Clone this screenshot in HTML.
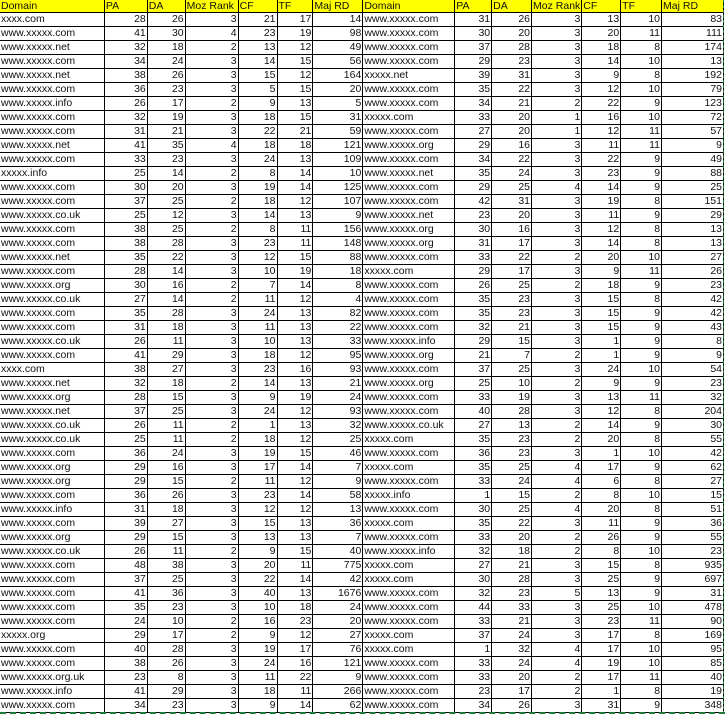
<!DOCTYPE html>
<html><head><meta charset="utf-8">
<style>
html,body{margin:0;padding:0;background:#fff;width:725px;height:715px;overflow:hidden}
table{position:absolute;left:-1px;top:-1px;border-collapse:collapse;table-layout:fixed;font-family:"Liberation Sans",Arial,sans-serif;font-size:10.5px;color:#111}
td{border:1px solid #000;padding:0 1px 0 0;text-align:right;white-space:nowrap;overflow:hidden;height:13px;line-height:13px}
td.d{text-align:left;padding:0 0 0 1px}
tr.h td{background:#ffff00;text-align:left;height:12px;line-height:12px;padding-left:1px}
.gb{position:absolute;left:0;top:712px;width:725px;height:0;border-top:2px dashed #1e7a3c}
.gr{position:absolute;left:723px;top:0;width:0;height:714px;border-left:1px dashed #1e7a3c}
</style></head><body>
<table>
<colgroup><col style="width:105px"><col style="width:43px"><col style="width:38px"><col style="width:53px"><col style="width:39px"><col style="width:36px"><col style="width:50px"><col style="width:92px"><col style="width:37px"><col style="width:40px"><col style="width:49px"><col style="width:39px"><col style="width:41px"><col style="width:62px"></colgroup>
<tr class="h"><td>Domain</td><td>PA</td><td>DA</td><td>Moz Rank</td><td>CF</td><td>TF</td><td>Maj RD</td><td>Domain</td><td>PA</td><td>DA</td><td>Moz Rank</td><td>CF</td><td>TF</td><td>Maj RD</td></tr>
<tr><td class="d">xxxx.com</td><td>28</td><td>26</td><td>3</td><td>21</td><td>17</td><td>14</td><td class="d">www.xxxxx.com</td><td>31</td><td>26</td><td>3</td><td>13</td><td>10</td><td>83</td></tr>
<tr><td class="d">www.xxxxx.com</td><td>41</td><td>30</td><td>4</td><td>23</td><td>19</td><td>98</td><td class="d">www.xxxxx.com</td><td>30</td><td>20</td><td>3</td><td>20</td><td>11</td><td>111</td></tr>
<tr><td class="d">www.xxxxx.net</td><td>32</td><td>18</td><td>2</td><td>13</td><td>12</td><td>49</td><td class="d">www.xxxxx.com</td><td>37</td><td>28</td><td>3</td><td>18</td><td>8</td><td>174</td></tr>
<tr><td class="d">www.xxxxx.com</td><td>34</td><td>24</td><td>3</td><td>14</td><td>15</td><td>56</td><td class="d">www.xxxxx.com</td><td>29</td><td>23</td><td>3</td><td>14</td><td>10</td><td>13</td></tr>
<tr><td class="d">www.xxxxx.net</td><td>38</td><td>26</td><td>3</td><td>15</td><td>12</td><td>164</td><td class="d">xxxxx.net</td><td>39</td><td>31</td><td>3</td><td>9</td><td>8</td><td>192</td></tr>
<tr><td class="d">www.xxxxx.com</td><td>36</td><td>23</td><td>3</td><td>5</td><td>15</td><td>20</td><td class="d">www.xxxxx.com</td><td>35</td><td>22</td><td>3</td><td>12</td><td>10</td><td>79</td></tr>
<tr><td class="d">www.xxxxx.info</td><td>26</td><td>17</td><td>2</td><td>9</td><td>13</td><td>5</td><td class="d">www.xxxxx.com</td><td>34</td><td>21</td><td>2</td><td>22</td><td>9</td><td>123</td></tr>
<tr><td class="d">www.xxxxx.com</td><td>32</td><td>19</td><td>3</td><td>18</td><td>15</td><td>31</td><td class="d">xxxxx.com</td><td>33</td><td>20</td><td>1</td><td>16</td><td>10</td><td>72</td></tr>
<tr><td class="d">www.xxxxx.com</td><td>31</td><td>21</td><td>3</td><td>22</td><td>21</td><td>59</td><td class="d">www.xxxxx.com</td><td>27</td><td>20</td><td>1</td><td>12</td><td>11</td><td>57</td></tr>
<tr><td class="d">www.xxxxx.net</td><td>41</td><td>35</td><td>4</td><td>18</td><td>18</td><td>121</td><td class="d">www.xxxxx.org</td><td>29</td><td>16</td><td>3</td><td>11</td><td>11</td><td>9</td></tr>
<tr><td class="d">www.xxxxx.com</td><td>33</td><td>23</td><td>3</td><td>24</td><td>13</td><td>109</td><td class="d">www.xxxxx.com</td><td>34</td><td>22</td><td>3</td><td>22</td><td>9</td><td>49</td></tr>
<tr><td class="d">xxxxx.info</td><td>25</td><td>14</td><td>2</td><td>8</td><td>14</td><td>10</td><td class="d">www.xxxxx.net</td><td>35</td><td>24</td><td>3</td><td>23</td><td>9</td><td>88</td></tr>
<tr><td class="d">www.xxxxx.com</td><td>30</td><td>20</td><td>3</td><td>19</td><td>14</td><td>125</td><td class="d">www.xxxxx.com</td><td>29</td><td>25</td><td>4</td><td>14</td><td>9</td><td>25</td></tr>
<tr><td class="d">www.xxxxx.com</td><td>37</td><td>25</td><td>2</td><td>18</td><td>12</td><td>107</td><td class="d">www.xxxxx.com</td><td>42</td><td>31</td><td>3</td><td>19</td><td>8</td><td>151</td></tr>
<tr><td class="d">www.xxxxx.co.uk</td><td>25</td><td>12</td><td>3</td><td>14</td><td>13</td><td>9</td><td class="d">www.xxxxx.net</td><td>23</td><td>20</td><td>3</td><td>11</td><td>9</td><td>29</td></tr>
<tr><td class="d">www.xxxxx.com</td><td>38</td><td>25</td><td>2</td><td>8</td><td>11</td><td>156</td><td class="d">www.xxxxx.org</td><td>30</td><td>16</td><td>3</td><td>12</td><td>8</td><td>13</td></tr>
<tr><td class="d">www.xxxxx.com</td><td>38</td><td>28</td><td>3</td><td>23</td><td>11</td><td>148</td><td class="d">www.xxxxx.org</td><td>31</td><td>17</td><td>3</td><td>14</td><td>8</td><td>13</td></tr>
<tr><td class="d">www.xxxxx.net</td><td>35</td><td>22</td><td>3</td><td>12</td><td>15</td><td>88</td><td class="d">www.xxxxx.com</td><td>33</td><td>22</td><td>2</td><td>20</td><td>10</td><td>27</td></tr>
<tr><td class="d">www.xxxxx.com</td><td>28</td><td>14</td><td>3</td><td>10</td><td>19</td><td>18</td><td class="d">xxxxx.com</td><td>29</td><td>17</td><td>3</td><td>9</td><td>11</td><td>26</td></tr>
<tr><td class="d">www.xxxxx.org</td><td>30</td><td>16</td><td>2</td><td>7</td><td>14</td><td>8</td><td class="d">www.xxxxx.com</td><td>26</td><td>25</td><td>2</td><td>18</td><td>9</td><td>23</td></tr>
<tr><td class="d">www.xxxxx.co.uk</td><td>27</td><td>14</td><td>2</td><td>11</td><td>12</td><td>4</td><td class="d">www.xxxxx.com</td><td>35</td><td>23</td><td>3</td><td>15</td><td>8</td><td>42</td></tr>
<tr><td class="d">www.xxxxx.com</td><td>35</td><td>28</td><td>3</td><td>24</td><td>13</td><td>82</td><td class="d">www.xxxxx.com</td><td>35</td><td>23</td><td>3</td><td>15</td><td>9</td><td>42</td></tr>
<tr><td class="d">www.xxxxx.com</td><td>31</td><td>18</td><td>3</td><td>11</td><td>13</td><td>22</td><td class="d">www.xxxxx.com</td><td>32</td><td>21</td><td>3</td><td>15</td><td>9</td><td>43</td></tr>
<tr><td class="d">www.xxxxx.co.uk</td><td>26</td><td>11</td><td>3</td><td>10</td><td>13</td><td>33</td><td class="d">www.xxxxx.info</td><td>29</td><td>15</td><td>3</td><td>1</td><td>9</td><td>8</td></tr>
<tr><td class="d">www.xxxxx.com</td><td>41</td><td>29</td><td>3</td><td>18</td><td>12</td><td>95</td><td class="d">www.xxxxx.org</td><td>21</td><td>7</td><td>2</td><td>1</td><td>9</td><td>9</td></tr>
<tr><td class="d">xxxx.com</td><td>38</td><td>27</td><td>3</td><td>23</td><td>16</td><td>93</td><td class="d">www.xxxxx.com</td><td>37</td><td>25</td><td>3</td><td>24</td><td>10</td><td>54</td></tr>
<tr><td class="d">www.xxxxx.net</td><td>32</td><td>18</td><td>2</td><td>14</td><td>13</td><td>21</td><td class="d">www.xxxxx.org</td><td>25</td><td>10</td><td>2</td><td>9</td><td>9</td><td>23</td></tr>
<tr><td class="d">www.xxxxx.org</td><td>28</td><td>15</td><td>3</td><td>9</td><td>19</td><td>24</td><td class="d">www.xxxxx.com</td><td>33</td><td>19</td><td>3</td><td>13</td><td>11</td><td>32</td></tr>
<tr><td class="d">www.xxxxx.net</td><td>37</td><td>25</td><td>3</td><td>24</td><td>12</td><td>93</td><td class="d">www.xxxxx.com</td><td>40</td><td>28</td><td>3</td><td>12</td><td>8</td><td>204</td></tr>
<tr><td class="d">www.xxxxx.co.uk</td><td>26</td><td>11</td><td>2</td><td>1</td><td>13</td><td>32</td><td class="d">www.xxxxx.co.uk</td><td>27</td><td>13</td><td>2</td><td>14</td><td>9</td><td>30</td></tr>
<tr><td class="d">www.xxxxx.co.uk</td><td>25</td><td>11</td><td>2</td><td>18</td><td>12</td><td>25</td><td class="d">xxxxx.com</td><td>35</td><td>23</td><td>2</td><td>20</td><td>8</td><td>55</td></tr>
<tr><td class="d">www.xxxxx.com</td><td>36</td><td>24</td><td>3</td><td>19</td><td>15</td><td>46</td><td class="d">www.xxxxx.com</td><td>36</td><td>23</td><td>3</td><td>1</td><td>10</td><td>42</td></tr>
<tr><td class="d">www.xxxxx.org</td><td>29</td><td>16</td><td>3</td><td>17</td><td>14</td><td>7</td><td class="d">xxxxx.com</td><td>35</td><td>25</td><td>4</td><td>17</td><td>9</td><td>62</td></tr>
<tr><td class="d">www.xxxxx.org</td><td>29</td><td>15</td><td>2</td><td>11</td><td>12</td><td>9</td><td class="d">www.xxxxx.com</td><td>33</td><td>24</td><td>4</td><td>6</td><td>8</td><td>27</td></tr>
<tr><td class="d">www.xxxxx.com</td><td>36</td><td>26</td><td>3</td><td>23</td><td>14</td><td>58</td><td class="d">xxxxx.info</td><td>1</td><td>15</td><td>2</td><td>8</td><td>10</td><td>15</td></tr>
<tr><td class="d">www.xxxxx.info</td><td>31</td><td>18</td><td>3</td><td>12</td><td>12</td><td>13</td><td class="d">www.xxxxx.com</td><td>30</td><td>25</td><td>4</td><td>20</td><td>8</td><td>51</td></tr>
<tr><td class="d">www.xxxxx.com</td><td>39</td><td>27</td><td>3</td><td>15</td><td>13</td><td>36</td><td class="d">xxxxx.com</td><td>35</td><td>22</td><td>3</td><td>11</td><td>9</td><td>36</td></tr>
<tr><td class="d">www.xxxxx.org</td><td>29</td><td>15</td><td>3</td><td>13</td><td>13</td><td>7</td><td class="d">www.xxxxx.com</td><td>33</td><td>20</td><td>2</td><td>26</td><td>9</td><td>55</td></tr>
<tr><td class="d">www.xxxxx.co.uk</td><td>26</td><td>11</td><td>2</td><td>9</td><td>15</td><td>40</td><td class="d">www.xxxxx.info</td><td>32</td><td>18</td><td>2</td><td>8</td><td>10</td><td>23</td></tr>
<tr><td class="d">www.xxxxx.com</td><td>48</td><td>38</td><td>3</td><td>20</td><td>11</td><td>775</td><td class="d">xxxxx.com</td><td>27</td><td>21</td><td>3</td><td>15</td><td>8</td><td>935</td></tr>
<tr><td class="d">www.xxxxx.com</td><td>37</td><td>25</td><td>3</td><td>22</td><td>14</td><td>42</td><td class="d">xxxxx.com</td><td>30</td><td>28</td><td>3</td><td>25</td><td>9</td><td>697</td></tr>
<tr><td class="d">www.xxxxx.com</td><td>41</td><td>36</td><td>3</td><td>40</td><td>13</td><td>1676</td><td class="d">www.xxxxx.com</td><td>32</td><td>23</td><td>5</td><td>13</td><td>9</td><td>31</td></tr>
<tr><td class="d">www.xxxxx.com</td><td>35</td><td>23</td><td>3</td><td>10</td><td>18</td><td>24</td><td class="d">www.xxxxx.com</td><td>44</td><td>33</td><td>3</td><td>25</td><td>10</td><td>478</td></tr>
<tr><td class="d">www.xxxxx.com</td><td>24</td><td>10</td><td>2</td><td>16</td><td>23</td><td>20</td><td class="d">www.xxxxx.com</td><td>33</td><td>21</td><td>3</td><td>23</td><td>11</td><td>90</td></tr>
<tr><td class="d">xxxxx.org</td><td>29</td><td>17</td><td>2</td><td>9</td><td>12</td><td>27</td><td class="d">xxxxx.com</td><td>37</td><td>24</td><td>3</td><td>17</td><td>8</td><td>169</td></tr>
<tr><td class="d">www.xxxxx.com</td><td>40</td><td>28</td><td>3</td><td>19</td><td>17</td><td>76</td><td class="d">xxxxx.com</td><td>1</td><td>32</td><td>4</td><td>17</td><td>10</td><td>95</td></tr>
<tr><td class="d">www.xxxxx.com</td><td>38</td><td>26</td><td>3</td><td>24</td><td>16</td><td>121</td><td class="d">www.xxxxx.com</td><td>33</td><td>24</td><td>4</td><td>19</td><td>10</td><td>85</td></tr>
<tr><td class="d">www.xxxxx.org.uk</td><td>23</td><td>8</td><td>3</td><td>11</td><td>22</td><td>9</td><td class="d">www.xxxxx.com</td><td>33</td><td>20</td><td>2</td><td>17</td><td>11</td><td>40</td></tr>
<tr><td class="d">www.xxxxx.info</td><td>41</td><td>29</td><td>3</td><td>18</td><td>11</td><td>266</td><td class="d">www.xxxxx.com</td><td>23</td><td>17</td><td>2</td><td>1</td><td>8</td><td>19</td></tr>
<tr><td class="d">www.xxxxx.com</td><td>34</td><td>23</td><td>3</td><td>9</td><td>14</td><td>62</td><td class="d">www.xxxxx.com</td><td>34</td><td>26</td><td>3</td><td>31</td><td>9</td><td>348</td></tr>
</table>
<div class="gb"></div><div class="gr"></div>
</body></html>
